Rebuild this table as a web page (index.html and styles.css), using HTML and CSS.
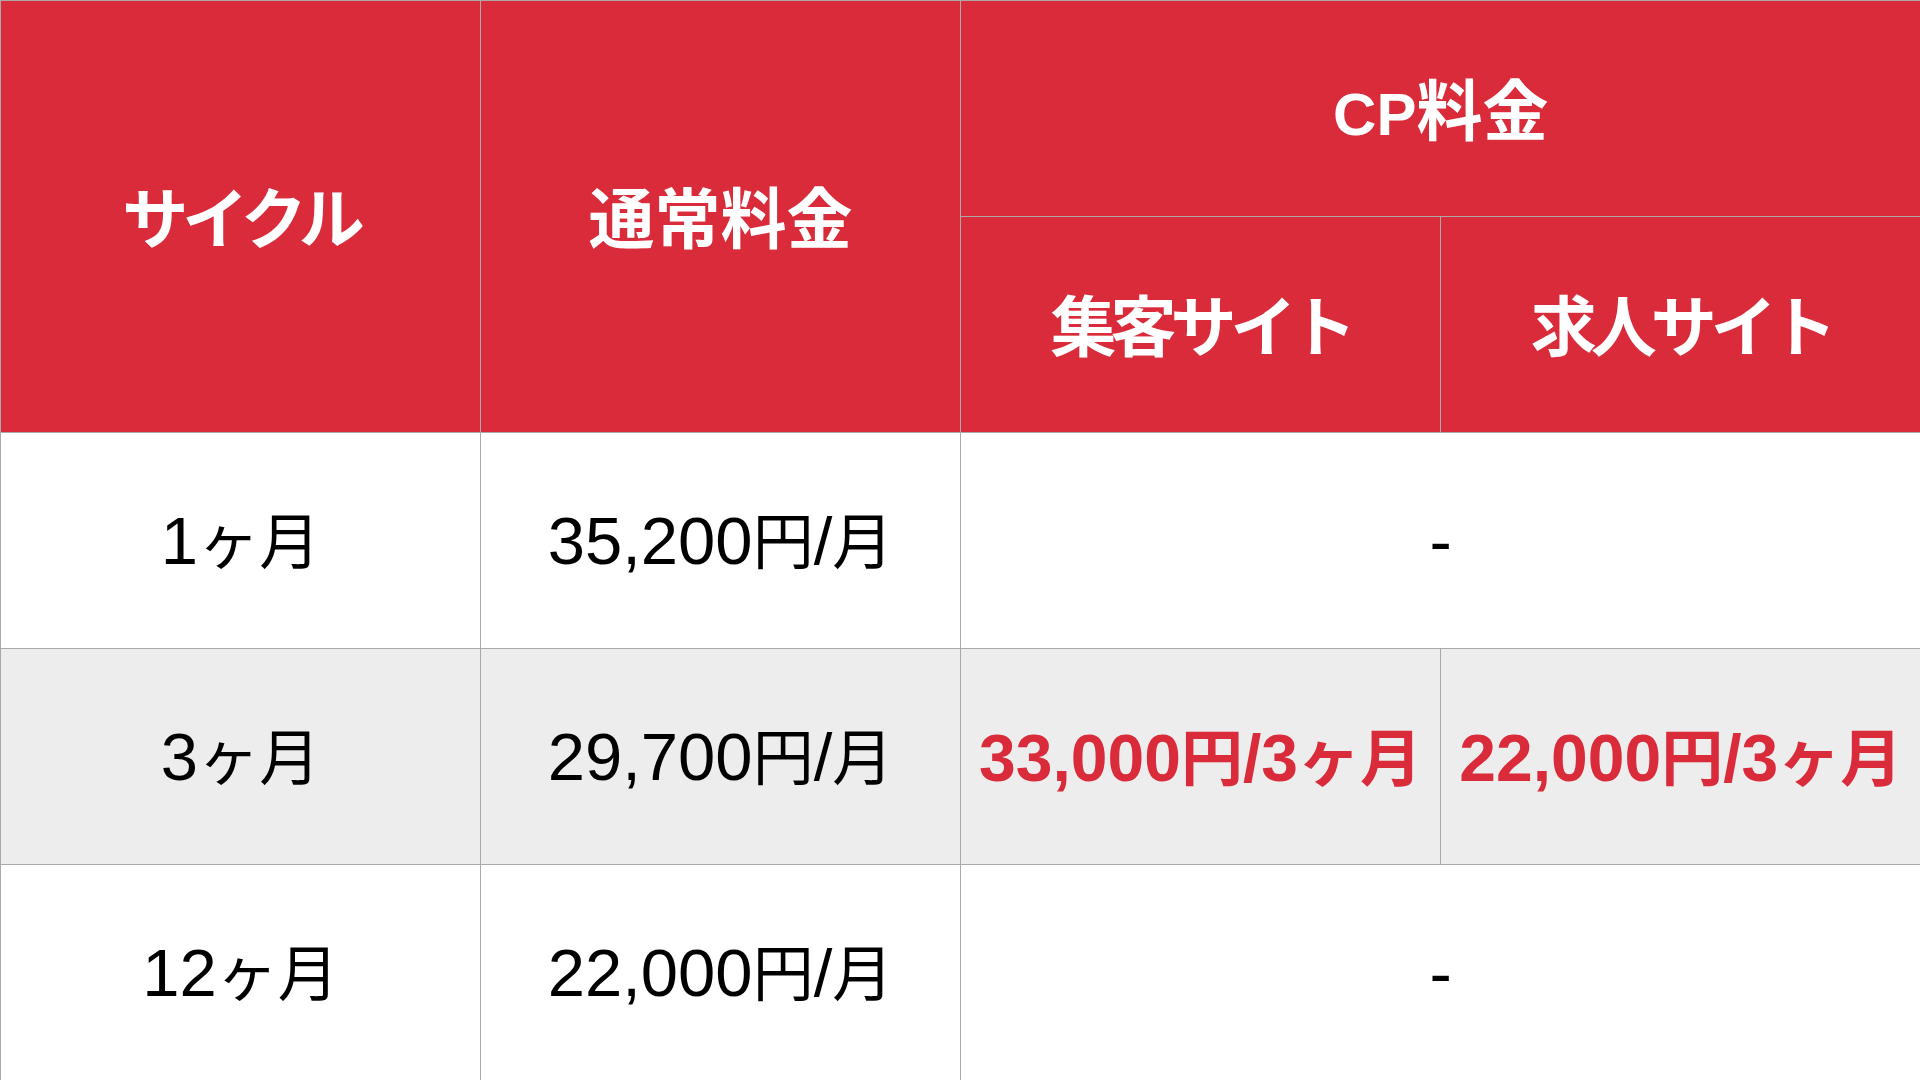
FILE: index.html
```html
<!DOCTYPE html>
<html lang="ja">
<head>
<meta charset="utf-8">
<title>料金表</title>
<link rel="stylesheet" href="styles.css">
</head>
<body>
<table class="price">
  <colgroup>
    <col class="c"><col class="c"><col class="c"><col class="c">
  </colgroup>
  <thead>
    <tr>
      <th rowspan="2" class="head"><span class="jp kana">サイクル</span></th>
      <th rowspan="2" class="head"><span class="jp">通常料金</span></th>
      <th colspan="2" class="head top">CP<span class="jp">料金</span></th>
    </tr>
    <tr>
      <th class="head"><span class="jp kana">集客サイト</span></th>
      <th class="head"><span class="jp kana">求人サイト</span></th>
    </tr>
  </thead>
  <tbody>
    <tr>
      <td>1<span class="jp">ヶ月</span></td>
      <td>35,200<span class="jp">円</span>/<span class="jp">月</span></td>
      <td colspan="2">-</td>
    </tr>
    <tr class="alt">
      <td>3<span class="jp">ヶ月</span></td>
      <td>29,700<span class="jp">円</span>/<span class="jp">月</span></td>
      <td class="cp">33,000<span class="jp">円</span>/3<span class="jp">ヶ月</span></td>
      <td class="cp">22,000<span class="jp">円</span>/3<span class="jp">ヶ月</span></td>
    </tr>
    <tr>
      <td>12<span class="jp">ヶ月</span></td>
      <td>22,000<span class="jp">円</span>/<span class="jp">月</span></td>
      <td colspan="2">-</td>
    </tr>
  </tbody>
</table>
</body>
</html>
```

FILE: styles.css
```css
html, body {
  margin: 0;
  padding: 0;
  background: #ffffff;
}

body {
  width: 1920px;
  height: 1080px;
  overflow: hidden;
  font-family: "Liberation Sans", "Noto Sans CJK JP", sans-serif;
}

.price {
  width: 1920px;
  border-collapse: collapse;
  table-layout: fixed;
  border-top: 1px solid #a9a9a9;
  border-left: 1px solid #a9a9a9;
}

.price .c {
  width: 480px;
}

.price th,
.price td {
  height: 215px;
  padding: 0;
  text-align: center;
  vertical-align: middle;
  white-space: nowrap;
  border: 1px solid #a9a9a9;
  line-height: 1;
}

.price tr > :last-child {
  border-right: none;
}

.head {
  background: #d92b3a;
  color: #ffffff;
  font-weight: 700;
  font-size: 60px;
}

.head .jp {
  font-family: "Noto Sans CJK JP", sans-serif;
  font-size: 66px;
  font-weight: 700;
}

.head .kana {
  letter-spacing: -6px;
}

.price td {
  color: #000000;
  font-size: 67px;
  font-weight: 400;
}

.price td .jp {
  font-family: "Noto Sans CJK JP", sans-serif;
  font-size: 61px;
}

.alt td {
  background: #ededed;
}

.price td.cp {
  color: #d92b3a;
  font-weight: 700;
  font-size: 66px;
}

.price td.cp .jp {
  font-size: 62px;
  font-weight: 700;
}
```
